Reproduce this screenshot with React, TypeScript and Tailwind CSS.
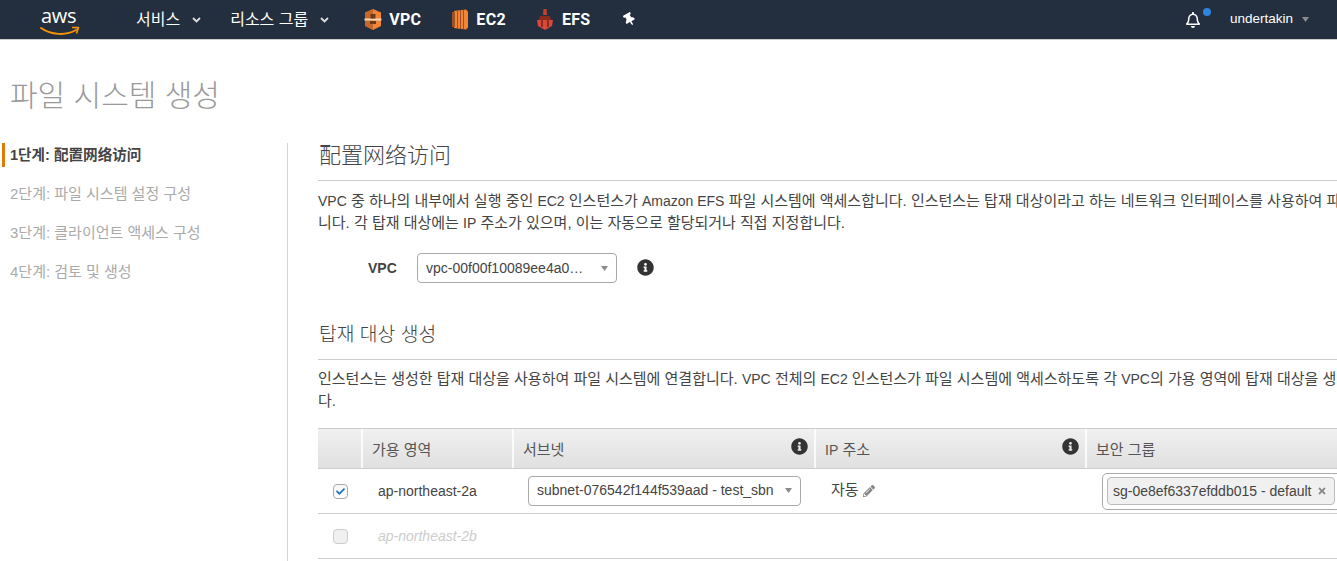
import React from "react";
import { FaInfoCircle, FaPencilAlt, FaTimes, FaThumbtack, FaRegBell, FaCheck } from "react-icons/fa";

const KR = { fontFamily: '"Liberation Sans","Noto Sans CJK KR",sans-serif' };

function Chevron() {
  return (
    <svg width="9" height="6" viewBox="0 0 9 6" className="text-[#ddd]">
      <path d="M1 1 L4.5 4.5 L8 1" fill="none" stroke="currentColor" strokeWidth="1.8" />
    </svg>
  );
}

function Caret() {
  return (
    <svg width="7" height="5" viewBox="0 0 7 5">
      <polygon points="0,0 7,0 3.5,5" fill="#8c8c8c" />
    </svg>
  );
}

function AwsLogo() {
  return (
    <div className="relative w-[40px] h-[34px]">
      <span className="absolute left-[1px] top-[-2px] text-[20px] leading-[26px] text-white tracking-[-0.3px]" style={{ fontFamily: '"Open Sans",sans-serif' }}>aws</span>
      <svg className="absolute left-0 top-[20px]" width="40" height="12" viewBox="0 0 40 12">
        <path d="M1 3 C11 10 26 11 36 5" fill="none" stroke="#f79400" strokeWidth="2" strokeLinecap="round" />
        <path d="M32 2.5 L38.5 2.6 L36.5 8.5" fill="none" stroke="#f79400" strokeWidth="1.6" strokeLinejoin="round" />
      </svg>
    </div>
  );
}

function VpcIcon() {
  return (
    <svg width="18" height="21" viewBox="0 0 18 21">
      <polygon points="9,0 17,3.5 17,17 9,21 1,17 1,3.5" fill="#f58536" />
      <polygon points="9,0 1,3.5 1,17 9,21" fill="#9d5025" opacity="0.55" />
      <rect x="0.5" y="9.5" width="17" height="2" fill="#fbd8bc" />
      <rect x="6.5" y="5" width="5" height="4.5" fill="#6b3a1a" />
      <rect x="6" y="12" width="6" height="3" fill="#6b3a1a" />
    </svg>
  );
}

function Ec2Icon() {
  return (
    <svg width="16" height="21" viewBox="0 0 16 21">
      <polygon points="2,2 14,0.5 16,2.5 16,18.5 14,20.5 2,19" fill="#f58536" />
      <rect x="0" y="3" width="3" height="15" fill="#9d5025" />
      <rect x="5" y="1.5" width="1" height="18" fill="#9d5025" />
      <rect x="8" y="1" width="1" height="19" fill="#9d5025" />
      <rect x="11" y="1" width="1" height="19" fill="#9d5025" />
    </svg>
  );
}

function EfsIcon() {
  return (
    <svg width="18" height="21" viewBox="0 0 18 21">
      <polygon points="7.5,0 10.5,0 11,6 7,6" fill="#c7402f" />
      <polygon points="4,7 14,7 15,11 3,11" fill="#8c2b20" />
      <polygon points="1,11 17,11 16,17 9,21 2,17" fill="#d9493a" />
      <rect x="5" y="11" width="2" height="7" fill="#8c2b20" />
      <rect x="11" y="11" width="2" height="7" fill="#8c2b20" />
    </svg>
  );
}

function Step({ active, children }: { active?: boolean; children: React.ReactNode }) {
  return (
    <div
      className={
        active
          ? "h-[24px] pl-[5px] border-l-[3px] border-[#e07b00] text-[14.6px] leading-[24px] font-bold text-[#444] whitespace-nowrap"
          : "h-[24px] pl-[8px] mt-[15px] first-of-type:mt-0 text-[15px] leading-[24px] text-[#aaa] whitespace-nowrap"
      }
    >
      {children}
    </div>
  );
}

function HeadCell({ children, info, last }: { children?: React.ReactNode; info?: boolean; last?: boolean }) {
  return (
    <div className={"relative h-full flex items-center pl-[9px] text-[15px] text-[#555] " + (last ? "" : "border-r-2 border-white/80")}>
      <span className="mt-[3px]">{children}</span>
      {info && <FaInfoCircle className="absolute right-[6px] top-[9px] text-[#333]" size={17} />}
    </div>
  );
}

const L = ({ children }: { children: React.ReactNode }) => <span className="text-[14px]">{children}</span>;

export default function App() {
  return (
    <div className="w-[1337px] h-[561px] overflow-hidden bg-white flex flex-col" style={KR}>
      <header className="h-[39px] shrink-0 bg-[#232f3e] border-b border-[#ccc] flex items-center text-white box-content">
        <div className="ml-[40px] mr-[56px] mt-[4px]"><AwsLogo /></div>
        <div className="flex items-center gap-[12px] text-[16px] mr-[29px]"><span>서비스</span><Chevron /></div>
        <div className="flex items-center gap-[12px] text-[16px] mr-[35px]"><span className="whitespace-nowrap">리소스 그룹</span><Chevron /></div>
        <div className="flex items-center gap-[7px] text-[16px] tracking-[0.3px] font-bold mr-[31px]" style={{ fontFamily: "Roboto,sans-serif" }}><VpcIcon /><span>VPC</span></div>
        <div className="flex items-center gap-[8px] text-[16px] tracking-[0.3px] font-bold mr-[30px]" style={{ fontFamily: "Roboto,sans-serif" }}><Ec2Icon /><span>EC2</span></div>
        <div className="flex items-center gap-[8px] text-[16px] tracking-[0.3px] font-bold mr-[33px]" style={{ fontFamily: "Roboto,sans-serif" }}><EfsIcon /><span>EFS</span></div>
        <FaThumbtack size={13} className="-rotate-30" />
        <div className="ml-auto flex items-center">
          <div className="relative mr-[29px]">
            <FaRegBell size={16} className="mt-[1px]" />
            <span className="absolute right-[-10px] top-[-3px] w-[8px] h-[8px] rounded-full bg-[#2f84e0]" />
          </div>
          <span className="text-[13.5px] mr-[9px]">undertakin</span>
          <Caret />
          <div className="w-[28px]" />
        </div>
      </header>

      <h1 className="h-[103px] pl-[10px] pt-[36px] text-[30px] leading-[40px] font-light text-[#999] shrink-0">파일 시스템 생성</h1>

      <div className="flex flex-1 min-h-0">
        <nav className="w-[288px] shrink-0 border-r border-[#d5d5d5] pl-[2px]">
          <Step active>1단계: 配置网络访问</Step>
          <Step>2단계: 파일 시스템 설정 구성</Step>
          <Step>3단계: 클라이언트 액세스 구성</Step>
          <Step>4단계: 검토 및 생성</Step>
        </nav>

        <main className="flex-1 min-w-0 pl-[30px] overflow-hidden">
          <h2 className="h-[28px] pl-[1px] text-[22px] leading-[26px] font-light text-[#444]" style={{ fontFamily: '"Liberation Sans","Noto Sans CJK SC",sans-serif' }}>配置网络访问</h2>
          <div className="border-t border-[#ccc] mt-[9px]" />
          <p className="w-[1060px] mt-[9px] text-[15px] leading-[22px] text-[#444] whitespace-nowrap">
            <L>VPC</L> 중 하나의 내부에서 실행 중인 <L>EC2</L> 인스턴스가 <L>Amazon EFS</L> 파일 시스템에 액세스합니다. 인스턴스는 탑재 대상이라고 하는 네트워크 인터페이스를 사용하여 파<br />
            니다. 각 탑재 대상에는 <L>IP</L> 주소가 있으며, 이는 자동으로 할당되거나 직접 지정합니다.
          </p>

          <div className="flex items-center mt-[19px] h-[30px]">
            <span className="ml-[50px] w-[49px] text-[14px] font-bold text-[#444]">VPC</span>
            <div className="w-[200px] h-[30px] border border-[#aaa] rounded-[4px] flex items-center pl-[8px] pr-[8px] justify-between text-[14px] text-[#444]">
              <span>vpc-00f00f10089ee4a0…</span><Caret />
            </div>
            <FaInfoCircle className="ml-[20px] mb-[2px] text-[#333]" size={17} />
          </div>

          <h3 className="mt-[39px] h-[26px] pl-[1px] text-[19.3px] leading-[26px] font-light text-[#444]">탑재 대상 생성</h3>
          <div className="border-t border-[#ccc] mt-[11px]" />
          <p className="w-[1060px] mt-[8px] text-[15px] leading-[22px] text-[#444] whitespace-nowrap">
            인스턴스는 생성한 탑재 대상을 사용하여 파일 시스템에 연결합니다. <L>VPC</L> 전체의 <L>EC2</L> 인스턴스가 파일 시스템에 액세스하도록 각 <L>VPC</L>의 가용 영역에 탑재 대상을 생<br />
            다.
          </p>

          <div className="mt-[16px] w-[1019px]">
            <div className="grid grid-cols-[45px_151px_302px_271px_250px] h-[41px] border-y border-[#ccc] bg-gradient-to-b from-[#f0f0f0] to-[#e0e0e0]">
              <HeadCell />
              <HeadCell>가용 영역</HeadCell>
              <HeadCell info>서브넷</HeadCell>
              <HeadCell info><L>IP</L> 주소</HeadCell>
              <HeadCell last>보안 그룹</HeadCell>
            </div>

            <div className="grid grid-cols-[45px_151px_302px_271px_250px] h-[45px] border-b border-[#ccc] items-center text-[14px] text-[#444]">
              <div className="flex justify-center pr-[1px]">
                <span className="w-[15px] h-[15px] rounded-[4px] border border-[#aaa] bg-white flex items-center justify-center shadow-inner">
                  <FaCheck size={9} className="text-[#1f6fc9]" />
                </span>
              </div>
              <div className="pl-[15px]">ap-northeast-2a</div>
              <div className="pl-[14px]">
                <div className="w-[273px] h-[30px] border border-[#aaa] rounded-[4px] flex items-center justify-between pl-[8px] pr-[8px] mb-[1px]">
                  <span>subnet-076542f144f539aad - test_sbn</span><Caret />
                </div>
              </div>
              <div className="pl-[15px] flex items-center gap-[4px] pb-[1px]">
                <span className="text-[15px]">자동</span><FaPencilAlt size={12} className="text-[#888]" />
              </div>
              <div className="pl-[15px]">
                <div className="w-[245px] h-[37px] border border-[#aaa] rounded-[5px] flex items-center pl-[4px]">
                  <div className="w-[228px] h-[28px] border border-[#bbb] rounded-[4px] bg-[#f0f0f0] flex items-center justify-between pl-[5px] pr-[7px]">
                    <span className="whitespace-nowrap">sg-0e8ef6337efddb015 - default</span>
                    <FaTimes size={10} className="text-[#888]" />
                  </div>
                </div>
              </div>
            </div>

            <div className="grid grid-cols-[45px_151px_302px_271px_250px] h-[45px] border-b border-[#ccc] items-center text-[14px]">
              <div className="flex justify-center pr-[1px]">
                <span className="w-[15px] h-[15px] rounded-[4px] border border-[#ccc] bg-[#f0f0f0]" />
              </div>
              <div className="pl-[15px] italic text-[#ccc]">ap-northeast-2b</div>
            </div>
          </div>
        </main>
      </div>
    </div>
  );
}
